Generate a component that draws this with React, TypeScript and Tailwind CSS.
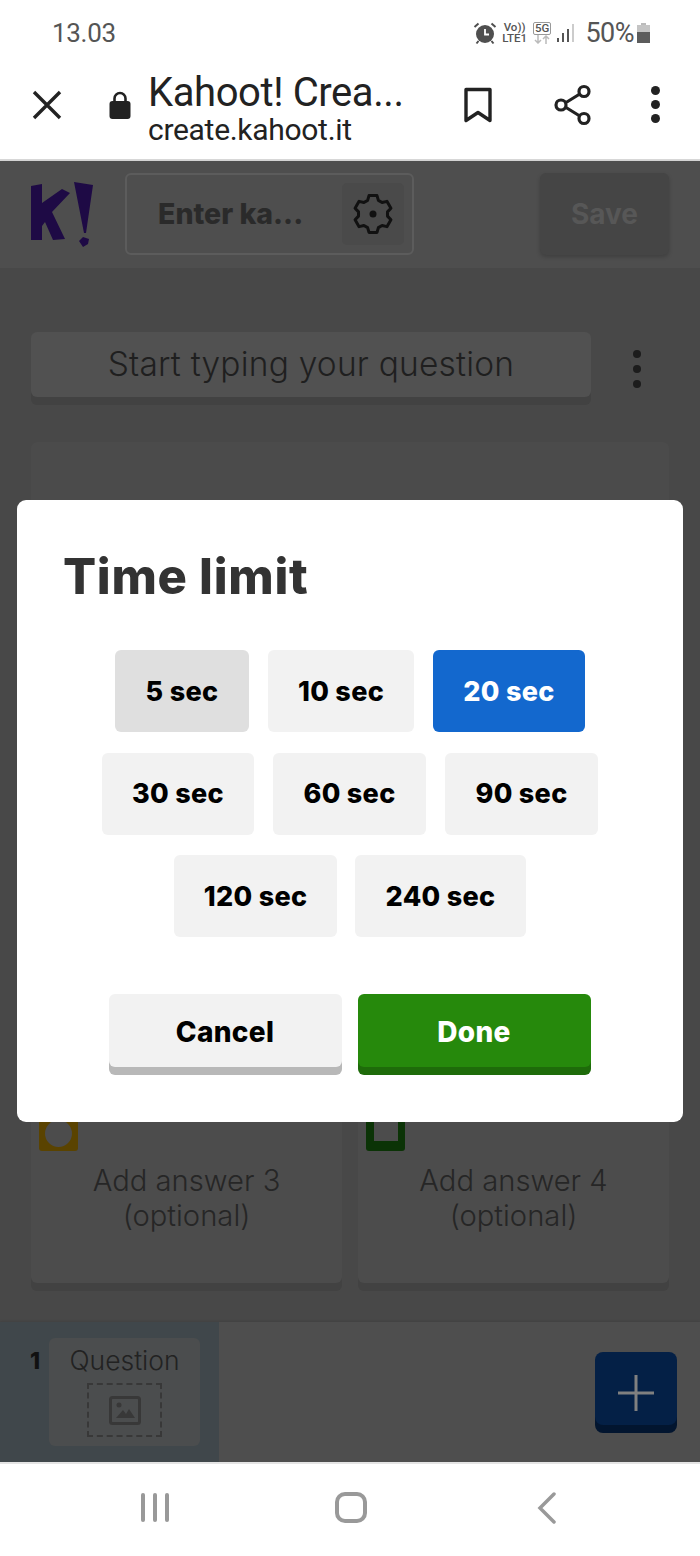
const roboto = { fontFamily: "Roboto, sans-serif" };

const timeRows = [
  [
    { label: "5 sec", cls: "w-[134px] bg-[#dfdfdf] text-black" },
    { label: "10 sec", cls: "w-[146px] bg-[#f2f2f2] text-black" },
    { label: "20 sec", cls: "w-[152px] bg-[#1368ce] text-white" },
  ],
  [
    { label: "30 sec", cls: "w-[152px] bg-[#f2f2f2] text-black" },
    { label: "60 sec", cls: "w-[153px] bg-[#f2f2f2] text-black" },
    { label: "90 sec", cls: "w-[153px] bg-[#f2f2f2] text-black" },
  ],
  [
    { label: "120 sec", cls: "w-[163px] bg-[#f2f2f2] text-black" },
    { label: "240 sec", cls: "w-[171px] bg-[#f2f2f2] text-black" },
  ],
];

// six toothed gear, the points are rotated around the middle of a 40x40 box
const gearPath = [0, 60, 120, 180, 240, 300]
  .map((deg) => {
    const a = (deg * Math.PI) / 180;
    return [
      [-5.4, -13.6],
      [-4, -18.4],
      [4, -18.4],
      [5.4, -13.6],
    ]
      .map(([x, y]) => `${(20 + x * Math.cos(a) - y * Math.sin(a)).toFixed(2)} ${(20 + x * Math.sin(a) + y * Math.cos(a)).toFixed(2)}`)
      .join("L");
  })
  .join("L");

const StatusBar = () => (
  <div className="h-[64px] flex items-center justify-between pl-[52px] pr-[50px] bg-white pt-[2px]" style={roboto}>
    <span className="text-[26px] text-[#555] tracking-[-0.3px]">13.03</span>
    <div className="flex items-center text-[#555]">
      {/* alarm */}
      <svg width="24" height="24" viewBox="0 0 24 24" className="mr-[5px]">
        <circle cx="12" cy="13" r="9" fill="#4f4f4f" />
        <path d="M12 8v5.500h4" stroke="#fff" strokeWidth="1.800" fill="none" />
        <path d="M1.500 6l4-3.500M22.500 6l-4-3.500M5.500 20l-2 2.500M18.500 20l2 2.500" stroke="#4f4f4f" strokeWidth="2" />
      </svg>
      <div className="flex flex-col items-center text-[11.5px] leading-[11px] font-medium mr-[6px]">
        <span>Vo))</span>
        <span>LTE1</span>
      </div>
      <div className="flex flex-col items-center mr-[6px]">
        <span className="border border-[#999] rounded-[2px] text-[11.5px] leading-[11px] px-[1px] font-medium">5G</span>
        <svg width="16" height="9" viewBox="0 0 16 9">
          <path d="M4 0v8M1 5l3 3 3-3" stroke="#bbb" strokeWidth="1.500" fill="none" />
          <path d="M12 9V1M9 4l3-3 3 3" stroke="#bbb" strokeWidth="1.500" fill="none" />
        </svg>
      </div>
      <div className="flex items-end gap-[3px] h-[18px] mr-[11px]">
        <div className="w-[2px] h-[4px] bg-[#555]" />
        <div className="w-[2px] h-[9px] bg-[#555]" />
        <div className="w-[2px] h-[13px] bg-[#555]" />
        <div className="w-[2px] h-[18px] bg-[#ccc]" />
      </div>
      <span className="text-[27px] tracking-[-0.5px] mr-[3px]">50%</span>
      <div className="w-[13px] h-[20px] flex flex-col items-center">
        <div className="w-[5px] h-[2px] bg-[#bbb]" />
        <div className="w-[13px] h-[7px] bg-[#c4c4c4]" />
        <div className="w-[13px] h-[11px] bg-[#5c5c5c]" />
      </div>
    </div>
  </div>
);

const BrowserBar = () => (
  <div className="h-[97px] bg-white flex items-center border-b-2 border-[#d8d8d8]" style={roboto}>
    <svg width="30" height="30" viewBox="0 0 30 30" className="ml-[32px] -mt-[14px]">
      <path d="M2 2l26 26M28 2L2 28" stroke="#222" strokeWidth="3.400" />
    </svg>
    <svg width="22" height="28" viewBox="0 0 22 28" className="ml-[47px] -mt-[14px]">
      <path d="M5.500 11V7.500a5.500 5.500 0 0 1 11 0V11" fill="none" stroke="#222" strokeWidth="2.600" />
      <rect x="0.500" y="10" width="21" height="18" rx="3" fill="#222" />
    </svg>
    <div className="ml-[17px] w-[300px] flex flex-col -mt-[4px]">
      <span className="text-[40px] leading-[40px] text-[#222] tracking-[-0.4px]">Kahoot! Crea...</span>
      <span className="text-[30px] leading-[33px] text-[#222] tracking-[-0.3px]">create.kahoot.it</span>
    </div>
    <svg width="32" height="38" viewBox="0 0 32 38" className="ml-[14px] -mt-[14px]">
      <path d="M4 3.500h24v31l-12-8-12 8z" fill="none" stroke="#222" strokeWidth="3.400" strokeLinejoin="round" />
    </svg>
    <svg width="40" height="42" viewBox="0 0 40 42" className="ml-[59px] -mt-[14px]">
      <path d="M9 21L30 8M9 21l21 13" stroke="#222" strokeWidth="3.200" />
      <circle cx="8" cy="21" r="5" fill="#fff" stroke="#222" strokeWidth="3.200" />
      <circle cx="31" cy="7.500" r="5" fill="#fff" stroke="#222" strokeWidth="3.200" />
      <circle cx="31" cy="34.500" r="5" fill="#fff" stroke="#222" strokeWidth="3.200" />
    </svg>
    <div className="ml-[58px] -mt-[14px] flex flex-col gap-[5px]">
      <div className="w-[9px] h-[9px] rounded-full bg-[#222]" />
      <div className="w-[9px] h-[9px] rounded-full bg-[#222]" />
      <div className="w-[9px] h-[9px] rounded-full bg-[#222]" />
    </div>
  </div>
);

const KahootHeader = () => (
  <div className="h-[107px] bg-[#4e4e4e] flex items-center pl-[30px] pr-[31px] shadow-[0_1px_3px_rgba(0,0,0,0.12)]">
    <svg width="64" height="65" viewBox="0 0 64 65" className="shrink-0">
      <path d="M1 4l11-2v19L32 7l8 4-18 19 13 27-12 1-8-18-3 4v14H1z" fill="#1e0a45" />
      <path d="M44 0l19 3-7 48h-2zM49 59l4-4 6 2-1 5-5 3z" fill="#1e0a45" />
    </svg>
    <div className="ml-[31px] -mt-[1px] w-[289px] h-[82px] rounded-[6px] border-2 border-[#5c5c5c] flex items-center pl-[31px] pr-[8px] justify-between">
      <span className="text-[28.500px] font-extrabold text-[#2a2a2a]">Enter ka...</span>
      <div className="w-[62px] h-[62px] rounded-[5px] bg-[#4a4a4a] flex items-center justify-center">
        <svg width="40" height="40" viewBox="0 0 40 40">
          <path d={`M${gearPath}Z`} fill="none" stroke="#111" strokeWidth="3" strokeLinejoin="round" />
          <circle cx="20" cy="20" r="3.500" fill="#111" />
        </svg>
      </div>
    </div>
    <div className="ml-auto -mt-[1px] w-[129px] h-[82px] rounded-[6px] bg-[#454545] shadow-[0_2px_4px_rgba(0,0,0,0.2)] flex items-center justify-center">
      <span className="text-[28px] font-bold text-[#575757]">Save</span>
    </div>
  </div>
);

const AnswerCard = ({ text, children }: { text: string; children: React.ReactNode }) => (
  <div className="h-[191px] rounded-[6px] bg-[#4c4c4c] shadow-[0_8px_0_#424242] relative pt-[71px] text-center text-[29.200px] font-light leading-[35px] text-[#262626]">
    <div className="absolute left-[8px] top-[11px]">{children}</div>
    {text}
    <br />
    (optional)
  </div>
);

const QuestionEditor = () => (
  <div className="flex-1 bg-[#484848] px-[31px] pt-[64px]">
    <div className="flex items-start">
      <div className="w-[560px] h-[65px] rounded-[6px] bg-[#515151] shadow-[0_8px_0_#424242] flex items-center justify-center text-[33.500px] font-light tracking-[0.2px] text-[#1f1f1f]">
        Start typing your question
      </div>
      <div className="ml-[42px] mt-[18px] flex flex-col gap-[7px]">
        <div className="w-[8px] h-[8px] rounded-full bg-[#1c1c1c]" />
        <div className="w-[8px] h-[8px] rounded-full bg-[#1c1c1c]" />
        <div className="w-[8px] h-[8px] rounded-full bg-[#1c1c1c]" />
      </div>
    </div>
    <div className="mt-[45px] h-[600px] rounded-[6px] bg-[#4b4b4b]" />
    <div className="mt-[50px] grid grid-cols-2 gap-[16px]">
      <AnswerCard text="Add answer 3">
        <div className="w-[39px] h-[48px] bg-[#5a4300] rounded-[3px] flex justify-center overflow-hidden">
          <div className="w-[27px] h-[27px] rounded-full bg-[#4c4c4c] mt-[17px]" />
        </div>
      </AnswerCard>
      <AnswerCard text="Add answer 4">
        <div className="w-[39px] h-[48px] bg-[#0b3306] rounded-[3px] flex justify-center">
          <div className="w-[24px] h-[38px] bg-[#4c4c4c]" />
        </div>
      </AnswerCard>
    </div>
  </div>
);

const SlideBar = () => (
  <div className="h-[140px] bg-[#4e4e4e] flex shadow-[0_-1px_2px_rgba(0,0,0,0.1)]">
    <div className="w-[219px] bg-[#40474b] pt-[16px] pl-[30px] flex">
      <span className="w-[19px] mt-[8px] text-[23px] font-extrabold leading-[30px] text-[#111]">1</span>
      <div className="w-[151px] h-[108px] rounded-[6px] bg-[#4b4d4e] flex flex-col items-center pt-[8px]">
        <span className="text-[26.500px] font-light leading-[28px] text-[#222]">Question</span>
        <div className="mt-[9px] w-[75px] h-[54px] border-2 border-dashed border-[#383838] flex items-center justify-center">
          <svg width="32" height="29" viewBox="0 0 32 29">
            <rect x="1.500" y="1.500" width="29" height="26" rx="2" fill="none" stroke="#383838" strokeWidth="3" />
            <circle cx="10" cy="9" r="2.500" fill="#383838" />
            <path d="M7 22l7-8 3 4 3-5 6 9z" fill="#383838" />
          </svg>
        </div>
      </div>
    </div>
    <div className="ml-auto mr-[23px] mt-[30px] w-[82px] h-[73px] rounded-[8px] bg-[#042046] shadow-[0_8px_0_#02152f] flex items-center justify-center">
      <svg width="36" height="36" viewBox="0 0 36 36" className="mt-[8px]">
        <path d="M18 0v36M0 18h36" stroke="#808080" strokeWidth="3" />
      </svg>
    </div>
  </div>
);

const NavBar = () => (
  <div className="h-[94px] bg-white border-t-2 border-[#e4e4e4] flex items-start pt-[29px]">
    <div className="ml-[141px] flex gap-[8px]">
      <div className="w-[4px] h-[29px] rounded-[2px] bg-[#999]" />
      <div className="w-[4px] h-[29px] rounded-[2px] bg-[#999]" />
      <div className="w-[4px] h-[29px] rounded-[2px] bg-[#999]" />
    </div>
    <div className="ml-[166px] w-[32px] h-[31px] -mt-[1px] rounded-[10px] border-4 border-[#999]" />
    <svg width="20" height="32" viewBox="0 0 20 32" className="ml-[170px] -mt-[1px]">
      <path d="M17 2L3 16l14 14" fill="none" stroke="#999" strokeWidth="3.500" strokeLinecap="round" />
    </svg>
  </div>
);

const TimeLimitModal = () => (
  <div className="absolute left-[17px] top-[500px] w-[666px] h-[622px] bg-white rounded-[9px] pl-[46px] pr-[47px] pt-[47px]">
    <h2 className="text-[49px] leading-[60px] font-extrabold text-[#333] tracking-[0.700px]">Time limit</h2>
    <div className="mt-[43px] -ml-[46px] -mr-[47px] flex flex-col gap-[20.500px]">
      {timeRows.map((row, i) => (
        <div key={row[0].label} className={`flex justify-center ${i === 2 ? "gap-[18px]" : "gap-[19px]"}`}>
          {row.map((b) => (
            <div key={b.label} className={`h-[82px] rounded-[6px] flex items-center justify-center pt-[2px] text-[27px] tracking-[0.3px] font-extrabold ${b.cls}`}>
              {b.label}
            </div>
          ))}
        </div>
      ))}
    </div>
    <div className="mt-[57px] flex justify-center gap-[16px]">
      <div className="w-[233px] h-[73px] rounded-[6px] bg-[#f2f2f2] shadow-[0_8px_0_#b8b8b8] flex items-center justify-center pt-[2px] text-[28px] tracking-[0.3px] font-extrabold text-black">
        Cancel
      </div>
      <div className="w-[233px] h-[73px] rounded-[6px] bg-[#26890c] shadow-[0_8px_0_#1e6b0a] flex items-center justify-center pt-[2px] text-[28px] tracking-[0.3px] font-extrabold text-white">
        Done
      </div>
    </div>
  </div>
);

export default function App() {
  return (
    <div className="relative w-[700px] h-[1556px] overflow-hidden flex flex-col bg-white" style={{ fontFamily: "Inter, sans-serif" }}>
      <StatusBar />
      <BrowserBar />
      <KahootHeader />
      <QuestionEditor />
      <SlideBar />
      <NavBar />
      <TimeLimitModal />
    </div>
  );
}
